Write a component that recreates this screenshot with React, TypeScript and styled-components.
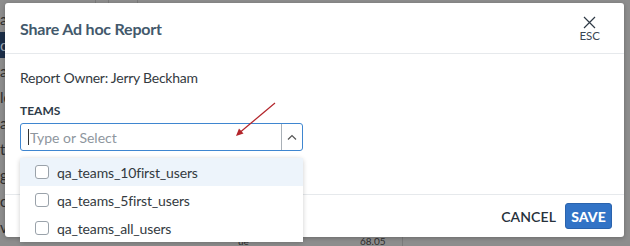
import React from "react";
import styled, { createGlobalStyle } from "styled-components";

const Global = createGlobalStyle`
  html, body { margin: 0; padding: 0; }
  body { font-family: Lato, "Noto Sans", sans-serif; width: 630px; height: 246px; overflow: hidden; }
`;

const Page = styled.div`
  position: relative;
  width: 630px;
  height: 246px;
  background: #8d8d8d;
  overflow: hidden;
`;

const BackColumn = styled.div`
  display: flex;
  flex-direction: column;
  padding-top: 6px;
  width: 12px;
`;

const BackCell = styled.div<{ $dark?: boolean }>`
  height: 26px;
  line-height: 26px;
  font-size: 15px;
  color: ${(p) => (p.$dark ? "#9aa3ad" : "#2f2f2f")};
  background: ${(p) => (p.$dark ? "#1c2e48" : "transparent")};
  overflow: hidden;
  white-space: nowrap;
`;

const BackFooter = styled.div`
  position: absolute;
  left: 0;
  right: 0;
  bottom: 0;
  height: 9px;
  font-size: 10px;
  line-height: 9px;
  color: #2e2e2e;
`;

const BackText = styled.span<{ $x: number }>`
  position: absolute;
  left: ${(p) => p.$x}px;
  top: 0;
`;

const BackLine = styled.div<{ $x: number }>`
  position: absolute;
  left: ${(p) => p.$x}px;
  top: 0;
  width: 1px;
  height: 100%;
  background: #7b7b7b;
`;

const TopStrip = styled.div`
  position: absolute;
  left: 0;
  right: 0;
  top: 0;
  height: 4px;
`;

const Modal = styled.div`
  position: absolute;
  left: 5px;
  top: 3px;
  width: 619px;
  height: 234px;
  background: #fff;
  border-radius: 3px;
  box-shadow: 0 1px 4px rgba(0, 0, 0, 0.25);
  display: flex;
  flex-direction: column;
`;

const Header = styled.div`
  height: 50px;
  border-bottom: 1px solid #e6e9ec;
  display: flex;
  align-items: center;
  justify-content: space-between;
  padding: 0 24px 0 15px;
`;

const Title = styled.h2`
  margin: 0;
  font-size: 16px;
  font-weight: 700;
  color: #43596c;
  letter-spacing: -0.2px;
`;

const Close = styled.button`
  border: none;
  background: none;
  padding: 0;
  margin-top: 2px;
  display: flex;
  flex-direction: column;
  align-items: center;
  gap: 1px;
  color: #3a4654;
  font-family: inherit;
  font-size: 11.5px;
  line-height: 12px;
`;

const Body = styled.div`
  flex: 1;
  padding: 14px 15px 0 15px;
  display: flex;
  flex-direction: column;
`;

const Owner = styled.div`
  font-size: 14px;
  color: #333a41;
  line-height: 20px;
  letter-spacing: -0.25px;
`;

const Label = styled.div`
  margin-top: 16px;
  font-size: 12px;
  font-weight: 700;
  color: #2f3c49;
  line-height: 14px;
`;

const SelectWrap = styled.div`
  position: relative;
  margin-top: 5px;
  width: 283px;
`;

const SelectBox = styled.div`
  height: 28px;
  box-sizing: border-box;
  border: 1px solid #3f86d0;
  border-radius: 3px;
  display: flex;
  align-items: stretch;
`;

const Input = styled.div`
  flex: 1;
  display: flex;
  align-items: center;
  padding-left: 7px;
  font-size: 14px;
  color: #8e969e;
`;

const Caret = styled.span`
  width: 1px;
  height: 16px;
  background: #333;
  margin-right: 1px;
`;

const Toggle = styled.div`
  width: 20px;
  border-left: 1px solid #a9b0b7;
  display: flex;
  align-items: center;
  justify-content: center;
`;

const Menu = styled.ul`
  position: absolute;
  left: 0;
  top: 35px;
  width: 283px;
  margin: 0;
  padding: 0;
  list-style: none;
  background: #fff;
  border-radius: 3px;
  box-shadow: 0 1px 5px rgba(0, 0, 0, 0.2);
  z-index: 2;
`;

const Option = styled.li<{ $active?: boolean }>`
  height: 28px;
  display: flex;
  align-items: center;
  padding-left: 15px;
  gap: 8px;
  font-size: 14px;
  letter-spacing: -0.15px;
  color: #333a41;
  background: ${(p) => (p.$active ? "#edf4fb" : "#fff")};
`;

const Box = styled.span`
  width: 12px;
  height: 12px;
  border: 1px solid #9aa2aa;
  border-radius: 3px;
  background: #fff;
`;

const Footer = styled.div`
  height: 42px;
  border-top: 1px solid #e6e9ec;
  display: flex;
  align-items: center;
  justify-content: flex-end;
  gap: 9px;
  padding-right: 12px;
`;

const Cancel = styled.button`
  border: none;
  background: none;
  padding: 0;
  font-family: inherit;
  font-size: 14px;
  font-weight: 600;
  letter-spacing: 0.1px;
  color: #27313b;
`;

const Save = styled.button`
  height: 26px;
  width: 47px;
  border: 1px solid #2a63ad;
  border-radius: 3px;
  background: #3273c6;
  color: #fff;
  font-family: inherit;
  font-size: 14px;
  font-weight: 900;
  padding: 0;
`;

const Arrow = styled.svg`
  position: absolute;
  left: 230px;
  top: 100px;
  z-index: 3;
`;

const backRows = [
  { t: "a" },
  { t: "o", dark: true },
  { t: "a" },
  { t: "le" },
  { t: "a" },
  { t: "t" },
  { t: "g" },
  { t: "o" },
  { t: "v" },
];

export default function App() {
  return (
    <>
      <Global />
      <Page>
        <TopStrip>
          <BackLine $x={95} />
          <BackLine $x={108} />
          <BackLine $x={137} />
        </TopStrip>
        <BackColumn>
          {backRows.map((r, i) => (
            <BackCell key={i} $dark={r.dark}>
              {r.t}
            </BackCell>
          ))}
        </BackColumn>
        <BackFooter>
          <BackText $x={238}>ue</BackText>
          <BackText $x={360}>68.05</BackText>
          <BackLine $x={402} />
        </BackFooter>
        <Modal>
          <Header>
            <Title>Share Ad hoc Report</Title>
            <Close>
              <svg width="13" height="13" viewBox="0 0 13 13">
                <path d="M1 1 L12 12 M12 1 L1 12" stroke="#2f3a46" strokeWidth="1.2" fill="none" />
              </svg>
              ESC
            </Close>
          </Header>
          <Body>
            <Owner>Report Owner: Jerry Beckham</Owner>
            <Label>TEAMS</Label>
            <SelectWrap>
              <SelectBox>
                <Input>
                  <Caret />
                  Type or Select
                </Input>
                <Toggle>
                  <svg width="10" height="6" viewBox="0 0 10 6">
                    <path d="M1 5.5 L5 1.5 L9 5.5" stroke="#555" strokeWidth="1.2" fill="none" />
                  </svg>
                </Toggle>
              </SelectBox>
              <Menu>
                <Option $active>
                  <Box />
                  qa_teams_10first_users
                </Option>
                <Option>
                  <Box />
                  qa_teams_5first_users
                </Option>
                <Option>
                  <Box />
                  qa_teams_all_users
                </Option>
              </Menu>
            </SelectWrap>
          </Body>
          <Footer>
            <Cancel>CANCEL</Cancel>
            <Save>SAVE</Save>
          </Footer>
        </Modal>
        <Arrow width="50" height="40" viewBox="0 0 50 40">
          <path d="M45 3 L8 34" stroke="#b3252b" strokeWidth="1.2" fill="none" />
          <path d="M6 36 L9 28.5 L13.5 33.5 Z" fill="#b3252b" />
        </Arrow>
      </Page>
    </>
  );
}
